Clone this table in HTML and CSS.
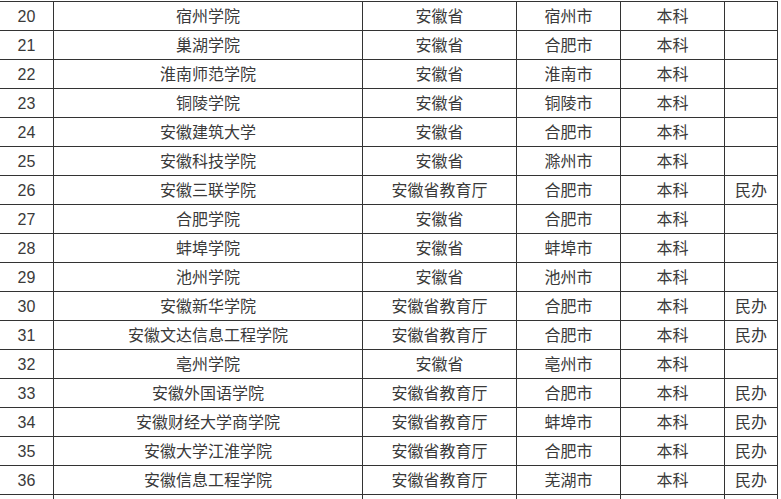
FILE: index.html
```html
<!DOCTYPE html>
<html lang="zh-CN">
<head>
<meta charset="utf-8">
<title>安徽高校名单</title>
<link rel="stylesheet" href="styles.css">
</head>
<body>
<div class="viewport">
<table class="schools">
<colgroup>
<col class="c-no"><col class="c-name"><col class="c-auth"><col class="c-city"><col class="c-level"><col class="c-note">
</colgroup>
<tbody>
<tr><td>20</td><td>宿州学院</td><td>安徽省</td><td>宿州市</td><td>本科</td><td></td></tr>
<tr><td>21</td><td>巢湖学院</td><td>安徽省</td><td>合肥市</td><td>本科</td><td></td></tr>
<tr><td>22</td><td>淮南师范学院</td><td>安徽省</td><td>淮南市</td><td>本科</td><td></td></tr>
<tr><td>23</td><td>铜陵学院</td><td>安徽省</td><td>铜陵市</td><td>本科</td><td></td></tr>
<tr><td>24</td><td>安徽建筑大学</td><td>安徽省</td><td>合肥市</td><td>本科</td><td></td></tr>
<tr><td>25</td><td>安徽科技学院</td><td>安徽省</td><td>滁州市</td><td>本科</td><td></td></tr>
<tr><td>26</td><td>安徽三联学院</td><td>安徽省教育厅</td><td>合肥市</td><td>本科</td><td>民办</td></tr>
<tr><td>27</td><td>合肥学院</td><td>安徽省</td><td>合肥市</td><td>本科</td><td></td></tr>
<tr><td>28</td><td>蚌埠学院</td><td>安徽省</td><td>蚌埠市</td><td>本科</td><td></td></tr>
<tr><td>29</td><td>池州学院</td><td>安徽省</td><td>池州市</td><td>本科</td><td></td></tr>
<tr><td>30</td><td>安徽新华学院</td><td>安徽省教育厅</td><td>合肥市</td><td>本科</td><td>民办</td></tr>
<tr><td>31</td><td>安徽文达信息工程学院</td><td>安徽省教育厅</td><td>合肥市</td><td>本科</td><td>民办</td></tr>
<tr><td>32</td><td>亳州学院</td><td>安徽省</td><td>亳州市</td><td>本科</td><td></td></tr>
<tr><td>33</td><td>安徽外国语学院</td><td>安徽省教育厅</td><td>合肥市</td><td>本科</td><td>民办</td></tr>
<tr><td>34</td><td>安徽财经大学商学院</td><td>安徽省教育厅</td><td>蚌埠市</td><td>本科</td><td>民办</td></tr>
<tr><td>35</td><td>安徽大学江淮学院</td><td>安徽省教育厅</td><td>合肥市</td><td>本科</td><td>民办</td></tr>
<tr><td>36</td><td>安徽信息工程学院</td><td>安徽省教育厅</td><td>芜湖市</td><td>本科</td><td>民办</td></tr>
<tr class="next"><td></td><td></td><td></td><td></td><td></td><td></td></tr>
</tbody>
</table>
</div>
</body>
</html>
```
FILE: styles.css
```css
html, body {
  margin: 0;
  padding: 0;
  background: #fff;
  overflow: hidden;
}
.viewport {
  width: 781px;
  height: 499px;
  overflow: hidden;
}
.schools {
  border-collapse: collapse;
  table-layout: fixed;
  margin: 1px 0 0 -1px;
  font-family: "Liberation Sans", "Noto Sans CJK SC", sans-serif;
  font-size: 16px;
  color: #3a3a3a;
}
.schools td {
  border: 1px solid #333;
  height: 26px;
  padding: 2px 0 0;
  text-align: center;
  vertical-align: middle;
  line-height: 20px;
  white-space: nowrap;
}
.c-no { width: 54px; }
.c-name { width: 309px; }
.c-auth { width: 154px; }
.c-city { width: 104px; }
.c-level { width: 104px; }
.c-note { width: 53px; }
```
